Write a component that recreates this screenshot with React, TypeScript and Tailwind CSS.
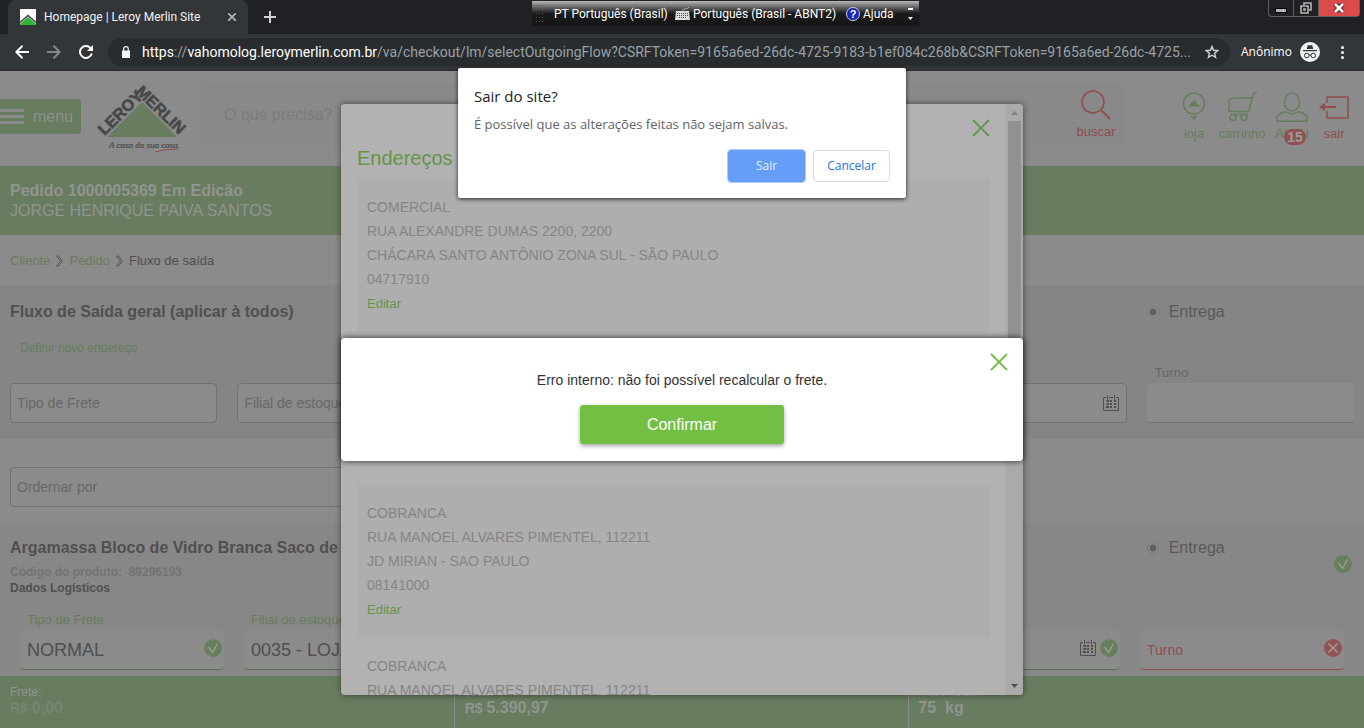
import React from "react";

function Cross({ className }: { className?: string }) {
  return (
    <svg className={className} viewBox="0 0 18 18" fill="none" stroke="currentColor" strokeWidth="1.8" aria-hidden="true">
      <path d="M1 1l16 16M17 1L1 17" />
    </svg>
  );
}

function StatusOk() {
  return (
    <svg className="size-[18px] shrink-0" viewBox="0 0 18 18" aria-hidden="true">
      <circle cx="9" cy="9" r="9" fill="#687f5d" />
      <path d="M4.500 8l4 5.500L13.500 4.500" fill="none" stroke="#a3a3a3" strokeWidth="1.200" />
    </svg>
  );
}

function StatusError() {
  return (
    <svg className="size-[18px] shrink-0" viewBox="0 0 18 18" aria-hidden="true">
      <circle cx="9" cy="9" r="9" fill="#925252" />
      <path d="M4.500 4.500l9 9M13.500 4.500l-9 9" fill="none" stroke="#a3a3a3" strokeWidth="1.200" />
    </svg>
  );
}

function CalendarIcon() {
  return (
    <svg className="size-4 shrink-0" viewBox="0 0 16 16" fill="none" stroke="#4f4f4f" aria-hidden="true">
      <path d="M3 2.500H.5v13h15v-13H13M6 2.500h4M4.500 0v4.500M11.500 0v4.500" />
      <path d="M3.500 6h2.500M7 6h2M11 6h2M3.500 9h2.500M7 9h2M11 9h2M3 12h3M7 12h2M11 12h2" strokeWidth="2" />
    </svg>
  );
}

function Logo() {
  return (
    <svg className="h-[70px] w-[92px]" viewBox="0 0 92 70" role="img" aria-label="Leroy Merlin">
      <path d="M46 19L81 54H11z" fill="#687c5f" />
      <g fill="#484848" fontFamily="Liberation Sans, sans-serif" fontWeight="700" fontSize="16" stroke="#484848" strokeWidth="0.6">
        <text transform="translate(8.500 53) rotate(-44.500)">LEROY</text>
        <text transform="translate(39 9.500) rotate(44)">MERLIN</text>
      </g>
      <text x="13" y="65" fill="#4a4a4a" stroke="#4a4a4a" strokeWidth="0.2" fontFamily="Liberation Serif, serif" fontStyle="italic" fontSize="9">A casa da sua casa.</text>
      <path d="M59 69q10-3 23-3" stroke="#8d4f4f" fill="none" />
    </svg>
  );
}

function BrowserChrome() {
  return (
    <header className="shrink-0 bg-[#202124] font-['Open_Sans','Noto_Sans',sans-serif] text-white">
      <div className="flex h-[34px] items-start pl-2">
        <div className="flex h-full w-60 items-center rounded-t-lg bg-[#323639] pr-2 pl-3">
          <svg className="size-4" viewBox="0 0 16 16" aria-hidden="true">
            <path d="M0 0h16v16H0z" fill="#fff" />
            <path d="M0 16v-1L8 8l8 7v1z" fill="#2fb634" />
            <path d="M0 13.500L8 6.500l8 7" stroke="#444" strokeWidth="1.500" fill="none" />
          </svg>
          <span className="ml-2 flex-1 truncate font-['Roboto',sans-serif] text-xs text-[#f1f3f4]">Homepage | Leroy Merlin Site</span>
          <button aria-label="Fechar guia" className="flex size-4 items-center justify-center text-[#b5b7b9]">
            <svg className="size-2" viewBox="0 0 8 8" stroke="currentColor" strokeWidth="1.600" aria-hidden="true">
              <path d="M0 0l8 8M8 0L0 8" />
            </svg>
          </button>
        </div>
        <button aria-label="Nova guia" className="ml-4 flex h-[34px] w-3 items-center justify-center text-[#d0d2d4]">
          <svg className="size-3" viewBox="0 0 12 12" stroke="currentColor" strokeWidth="2" aria-hidden="true">
            <path d="M6 0v12M0 6h12" />
          </svg>
        </button>
        <div className="mr-1 ml-auto flex h-[17px] rounded-b border border-t-0 border-[#5b5d60]">
          <button aria-label="Minimizar" className="flex w-6 items-center justify-center">
            <span className="mt-1 h-[5px] w-3 border border-black bg-[#b5b5b5]" />
          </button>
          <button aria-label="Restaurar" className="flex w-[26px] items-center justify-center border-x border-[#5b5d60]">
            <svg className="size-3" viewBox="0 0 12 12" fill="none" stroke="#b5b5b5" strokeWidth="1.600" aria-hidden="true">
              <path d="M4 3V1h7v7H9M1 4h7v7H1zM4 7h1v1H4z" />
            </svg>
          </button>
          <button aria-label="Fechar" className="flex w-10 items-center justify-center bg-[#dc4b4b]">
            <svg className="h-[10px] w-3" viewBox="0 0 12 10" aria-hidden="true">
              <path d="M2 1l8 8M10 1L2 9" stroke="#3b1c1c" strokeWidth="4.500" />
              <path d="M2 1l8 8M10 1L2 9" stroke="#fff" strokeWidth="2.600" />
            </svg>
          </button>
        </div>
      </div>
      <div className="flex h-9 items-center bg-[#323639] pr-[18px] pl-[6px]">
        <button aria-label="Voltar" className="flex w-8 justify-center">
          <svg className="size-[14px]" viewBox="0 0 14 14" fill="none" stroke="#fff" strokeWidth="2" aria-hidden="true">
            <path d="M14 7H1.500M7.500 0.800L1.300 7l6.200 6.200" />
          </svg>
        </button>
        <button aria-label="Avançar" className="flex w-8 justify-center">
          <svg className="size-[14px]" viewBox="0 0 14 14" fill="none" stroke="#85888b" strokeWidth="2" aria-hidden="true">
            <path d="M0 7h12.500M6.500 0.800L12.700 7l-6.200 6.200" />
          </svg>
        </button>
        <button aria-label="Recarregar" className="flex w-8 justify-center">
          <svg className="size-[14px]" viewBox="0 0 14 14" aria-hidden="true">
            <path d="M11.500 3A6 6 0 1 0 12.800 8.500" fill="none" stroke="#fff" strokeWidth="2" />
            <path d="M14 0v6H8z" fill="#fff" />
          </svg>
        </button>
        <div className="ml-[6px] flex h-7 min-w-0 flex-1 items-center rounded-full bg-[#282c2f] pr-[11px] pl-[14px]">
          <svg className="h-3 w-2 shrink-0" viewBox="0 0 8 12" aria-hidden="true">
            <path d="M0 4.500h8V12H0z" fill="#f1f3f4" />
            <path d="M1.700 5V3a2.300 2.300 0 0 1 4.600 0v2" fill="none" stroke="#f1f3f4" strokeWidth="1.200" />
          </svg>
          <span className="ml-3 flex-1 overflow-hidden font-['Roboto',sans-serif] text-sm whitespace-nowrap text-[#9aa0a6]">
            <span className="text-white">https</span>://<span className="text-white">vahomolog.leroymerlin.com.br</span>
            /va/checkout/lm/selectOutgoingFlow?CSRFToken=9165a6ed-26dc-4725-9183-b1ef084c268b&amp;CSRFToken=9165a6ed-26dc-4725...
          </span>
          <button aria-label="Favoritar" className="shrink-0">
            <svg className="size-[14px]" viewBox="0 0 14 14" fill="none" stroke="#d0d3d6" strokeWidth="1.400" aria-hidden="true">
              <path d="M7 1.500l1.600 3.800 4.100.3-3.100 2.700 1 4L7 10.200l-3.600 2.100 1-4L1.300 5.600l4.100-.3z" />
            </svg>
          </button>
        </div>
        <span className="ml-[11px] w-[50px] text-xs whitespace-nowrap">Anônimo</span>
        <svg className="ml-[9px] size-5" viewBox="0 0 20 20" aria-hidden="true">
          <circle cx="10" cy="10" r="10" fill="#f1f3f4" />
          <path d="M6.800 7l1-4 2.200.6 2.200-.6 1 4zM3 8h14v1.200H3z" fill="#323639" />
          <g fill="none" stroke="#323639">
            <circle cx="6.800" cy="13.500" r="2.300" />
            <circle cx="13.200" cy="13.500" r="2.300" />
            <path d="M9 13.200h2" />
          </g>
        </svg>
        <button aria-label="Mais opções" className="ml-[18px] flex w-2 flex-col items-center gap-[2px]">
          <span className="size-[3px] rounded-full bg-white" />
          <span className="size-[3px] rounded-full bg-white" />
          <span className="size-[3px] rounded-full bg-white" />
        </button>
      </div>
      <div className="h-px bg-[#2f2b2d]" />
    </header>
  );
}

function LanguageBar() {
  return (
    <div className="absolute top-px left-[532px] flex h-[25px] w-[387px] items-center bg-linear-to-b from-[#b9b9b9] from-0% via-[#1b1b1b] via-50% to-[#151515] font-['Roboto',sans-serif] text-xs whitespace-nowrap text-white">
      <svg className="ml-1 h-[18px] w-2" viewBox="0 0 8 18" aria-hidden="true">
        <path d="M.5 0v18M3.500 0v18M6.500 0v18" stroke="#555" strokeDasharray="1 3" />
      </svg>
      <span className="ml-[10px] w-[113px]">PT Português (Brasil)</span>
      <svg className="ml-2 h-[13px] w-[15px]" viewBox="0 0 15 13" aria-hidden="true">
        <path d="M7 4q0-2 3-2t4-2" fill="none" stroke="#aaa" />
        <path d="M1 4h13l1 9H0z" fill="#ddd" />
        <path d="M2 6.500h11M2 8.500h11M4 10.500h7" stroke="#444" strokeDasharray="1 1" />
      </svg>
      <span className="ml-[3px] w-[141px]">Português (Brasil - ABNT2)</span>
      <svg className="ml-3 size-[14px]" viewBox="0 0 14 14" aria-hidden="true">
        <circle cx="7" cy="7" r="6.500" fill="#1822b8" stroke="#c8cdf0" />
        <text x="7" y="11" textAnchor="middle" fontSize="11" fontWeight="700" fill="#fff" fontFamily="Liberation Sans, sans-serif">?</text>
      </svg>
      <span className="ml-[3px]">Ajuda</span>
      <svg className="mr-[6px] ml-auto h-[13px] w-[5px]" viewBox="0 0 5 13" fill="#fff" aria-hidden="true">
        <path d="M0 1h5v2H0zM0 10h5l-2.500 3z" />
      </svg>
    </div>
  );
}

function TopBar() {
  return (
    <div className="flex h-[95px] shrink-0 items-start">
      <button className="mt-7 flex h-[35px] w-[81px] items-center rounded-r bg-[#687c5f] text-base text-[#8d918b]">
        <svg className="h-[15px] w-6" viewBox="0 0 24 15" fill="#8b8b8b" aria-hidden="true">
          <path d="M0 0h24v3H0zM0 6h24v3H0zM0 12h24v3H0z" />
        </svg>
        <span className="ml-[9px]">menu</span>
      </button>
      <div className="mt-3 ml-[15px]">
        <Logo />
      </div>
      <div className="mt-[13px] ml-[14px] flex h-[62px] flex-1 items-center rounded bg-[#898989]">
        <input aria-label="Busca" placeholder="O que precisa?" className="min-w-0 flex-1 bg-transparent pl-[22px] text-base placeholder:text-[#7c7c7c] focus:outline-none" />
        <button className="flex w-[58px] flex-col items-center text-[13px] leading-4 text-[#8f4f4f]">
          <svg className="size-[30px]" viewBox="0 0 30 30" fill="none" stroke="currentColor" strokeWidth="1.600" aria-hidden="true">
            <circle cx="12" cy="12" r="11" />
            <path d="M20.500 20.500l8.500 8.500" strokeWidth="2" />
          </svg>
          <span className="mt-1">buscar</span>
        </button>
      </div>
      <nav className="mt-[21px] mr-2 ml-[51px] flex text-[13px] leading-4 text-[#667e5c]">
        <a href="#loja" className="flex w-9 flex-col items-center">
          <svg className="h-[30px] w-6" viewBox="0 0 24 30" fill="none" stroke="currentColor" strokeWidth="1.500" aria-hidden="true">
            <circle cx="12" cy="11.500" r="10.500" />
            <path d="M6 14.500l6-6.500 6 6.500zM8.500 24h7L12 28.500z" fill="currentColor" stroke="none" />
          </svg>
          <span className="mt-1">loja</span>
        </a>
        <a href="#carrinho" className="flex w-[60px] flex-col items-center">
          <svg className="h-[30px] w-8" viewBox="0 0 32 30" fill="none" stroke="currentColor" strokeWidth="1.500" aria-hidden="true">
            <path d="M31 1h-3l-5.500 18.500H3V9Q3 6.500 6 6.500l20-1" />
            <circle cx="7" cy="25.500" r="3" />
            <circle cx="18" cy="25.500" r="3" />
            <path d="M5 22.500h17" />
          </svg>
          <span className="mt-1">carrinho</span>
        </a>
        <a href="#conta" className="relative flex w-10 flex-col items-center">
          <svg className="h-[30px] w-8" viewBox="0 0 32 30" fill="none" stroke="currentColor" strokeWidth="1.500" aria-hidden="true">
            <ellipse cx="16" cy="10" rx="7.500" ry="9" />
            <path d="M1 29.300h30v-3q0-5-9-6.500-6 4-12 0-9 1.500-9 6.500z" />
          </svg>
          <span className="mt-1">ALAN</span>
          <span className="absolute top-[37px] left-3 flex h-4 w-[22px] items-center justify-center rounded-full bg-[#8d5151] text-sm font-bold text-[#9c9c9c]">15</span>
        </a>
        <a href="#sair" className="flex w-11 flex-col items-center text-[#8f4f4f]">
          <svg className="h-[30px] w-[30px]" viewBox="0 0 30 30" fill="none" stroke="currentColor" strokeWidth="1.500" aria-hidden="true">
            <path d="M8 11V5h21v21H8v-7" />
            <path d="M4 15h13" strokeWidth="2.200" />
            <path d="M0 15l6-4v8z" fill="currentColor" stroke="none" />
          </svg>
          <span className="mt-1">sair</span>
        </a>
      </nav>
    </div>
  );
}

function DeliveryRadio({ name }: { name: string }) {
  return (
    <label className="flex items-center text-base text-[#595959]">
      <input type="radio" name={name} defaultChecked className="size-3 appearance-none rounded-full border border-[#787878] bg-[radial-gradient(circle,#606060_3px,#8e8e8e_4px)]" />
      <span className="ml-[10px]">Entrega</span>
    </label>
  );
}

function Chevron() {
  return (
    <svg className="mx-[6px] h-3 w-[7px]" viewBox="0 0 7 12" fill="none" stroke="#555" aria-hidden="true">
      <path d="M.5 1h2l4 5-4 5h-2l4-5z" />
    </svg>
  );
}

const boxed = "h-10 w-full appearance-none rounded border border-[#727272] bg-[#8b8b8b] px-[6px] text-sm text-[#686868] focus:outline-none";
const filled = "flex h-10 items-center rounded border-b bg-[#8b8b8b] pr-[2px] pb-1 pl-[7px]";
const filledSelect = "mt-1 min-w-0 flex-1 appearance-none text-lg text-[#4f4f4f] focus:outline-none";

function OrderPage() {
  return (
    <main className="flex min-h-0 flex-1 flex-col overflow-hidden">
      <TopBar />
      <div className="flex h-[69px] shrink-0 flex-col justify-center bg-[#687c5f] px-[10px] pt-px text-base leading-5 text-[#929490]">
        <h1 className="font-bold">Pedido 1000005369 Em Edicão</h1>
        <p>JORGE HENRIQUE PAIVA SANTOS</p>
      </div>
      <nav className="flex h-[50px] shrink-0 items-center px-[10px] pt-[2px] text-[13px] text-[#667e5c]">
        <a href="#cliente">Cliente</a>
        <Chevron />
        <a href="#pedido">Pedido</a>
        <Chevron />
        <span className="text-[#4f4f4f]">Fluxo de saída</span>
      </nav>
      <section className="h-[154px] shrink-0 bg-[#858585] px-[10px]">
        <div className="grid grid-cols-6 gap-x-5 pt-[15px]">
          <h2 className="col-span-5 text-base font-bold text-[#505050]">Fluxo de Saída geral (aplicar à todos)</h2>
          <DeliveryRadio name="geral" />
        </div>
        <div className="mt-3 flex h-6 items-center pl-[10px] text-xs text-[#667e5c]">
          <a href="#endereco">Definir novo endereço</a>
        </div>
        <div className="mt-[3px] grid grid-cols-6 items-end gap-x-5">
          <select aria-label="Tipo de Frete" className={boxed}><option>Tipo de Frete</option></select>
          <select aria-label="Filial de estoque" className={boxed}><option>Filial de estoque</option></select>
          <span className="col-span-2" />
          <div className="flex h-10 items-center justify-end rounded border border-[#727272] bg-[#8b8b8b] pr-[7px]">
            <input aria-label="Data" className="min-w-0 flex-1 bg-transparent focus:outline-none" />
            <CalendarIcon />
          </div>
          <label className="flex h-[60px] flex-col text-[13px] leading-5 text-[#686868]">
            <span className="pl-2">Turno</span>
            <input className="h-10 w-full rounded border-b border-[#727272] bg-[#8b8b8b] px-2 focus:outline-none" />
          </label>
        </div>
      </section>
      <div className="h-[84px] shrink-0 px-[10px] pt-7">
        <div className="w-1/2">
          <select aria-label="Ordernar por" className={boxed}><option>Ordernar por</option></select>
        </div>
      </div>
      <section className="flex-1 bg-[#878787]">
        <div className="grid grid-cols-6 gap-x-5 px-[10px] pt-[13px]">
          <div className="col-span-5">
            <h2 className="text-base font-bold text-[#505050]">Argamassa Bloco de Vidro Branca Saco de</h2>
            <p className="mt-1 text-xs leading-4 font-bold text-[#737373]">Código do produto:&nbsp; 89296193</p>
            <p className="text-xs leading-4 font-bold text-[#505050]">Dados Logísticos</p>
          </div>
          <div className="relative">
            <DeliveryRadio name="item" />
            <span className="absolute top-[19px] right-[2px]"><StatusOk /></span>
          </div>
        </div>
        <div className="mt-4 grid grid-cols-6 items-end gap-x-5 px-5 text-[#667e5c]">
          <label className="text-[13px] leading-4">
            <span className="block pb-[2px] pl-[7px]">Tipo de Frete</span>
            <span className={`${filled} border-[#5c7550]`}>
              <select className={filledSelect}><option>NORMAL</option></select>
              <StatusOk />
            </span>
          </label>
          <label className="text-[13px] leading-4">
            <span className="block pb-[2px] pl-[7px]">Filial de estoque</span>
            <span className={`${filled} border-[#5c7550]`}>
              <select className={filledSelect}><option>0035 - LOJA</option></select>
            </span>
          </label>
          <span className="col-span-2" />
          <div className={`${filled} gap-1 border-[#5c7550]`}>
            <input aria-label="Data de entrega" className="min-w-0 flex-1 bg-transparent focus:outline-none" />
            <CalendarIcon />
            <StatusOk />
          </div>
          <div className={`${filled} border-[#8f4f4f]`}>
            <input aria-label="Turno" placeholder="Turno" className="mt-1 min-w-0 flex-1 bg-transparent text-sm placeholder:text-[#8f4f4f] focus:outline-none" />
            <StatusError />
          </div>
        </div>
      </section>
    </main>
  );
}

function Totals() {
  return (
    <footer className="grid h-[52px] shrink-0 grid-cols-3 bg-[#687c5f] text-xs leading-4 text-[#929490]">
      <div className="border-r border-[#8b8b8b] px-[10px] pt-2">
        <p>Frete:</p>
        <p className="text-sm leading-4 font-bold text-[#76866f]">R$ <span className="text-base leading-4">0,00</span></p>
      </div>
      <div className="border-r border-[#8b8b8b] px-[10px] pt-2">
        <p>Total:</p>
        <p className="text-sm leading-4 font-bold">R$ <span className="text-base leading-4">5.390,97</span></p>
      </div>
      <div className="px-[9px] pt-2">
        <p>Peso Total:</p>
        <p className="text-base leading-4 font-bold">75 &nbsp;kg</p>
      </div>
    </footer>
  );
}

const addresses: string[][] = [
  ["COMERCIAL", "RUA ALEXANDRE DUMAS 2200, 2200", "CHÁCARA SANTO ANTÔNIO ZONA SUL - SÃO PAULO", "04717910"],
  [],
  ["COBRANCA", "RUA MANOEL ALVARES PIMENTEL, 112211", "JD MIRIAN - SAO PAULO", "08141000"],
  ["COBRANCA", "RUA MANOEL ALVARES PIMENTEL, 112211"],
];

function AddressModal() {
  return (
    <div role="dialog" aria-label="Endereços" className="absolute inset-y-[33px] left-1/2 flex w-1/2 -translate-x-1/2 overflow-hidden rounded-sm bg-[#b2b2b2] shadow-[0_0_6px_rgba(0,0,0,0.5)]">
      <div className="min-w-0 flex-1 overflow-hidden px-4">
        <div className="flex h-[75px] items-start justify-between pt-[15px]">
          <h2 className="mt-[25px] text-xl leading-7 text-[#649549]">Endereços</h2>
          <button aria-label="Fechar endereços" className="text-[#649549]"><Cross className="size-[18px]" /></button>
        </div>
        <ul className="text-sm leading-6 text-[#858585]">
          {addresses.map((lines, i) => (
            <li key={i} className="h-[153px] px-[10px] pt-4 odd:bg-[#aeaeae]">
              {lines.map((line) => <p key={line}>{line}</p>)}
              {lines.length === 4 && <a href="#editar" className="block text-[13px] leading-[26px] text-[#649549]">Editar</a>}
            </li>
          ))}
        </ul>
      </div>
      <div className="flex w-[17px] flex-col items-center bg-[#aaaaaa]">
        <svg className="h-[17px] w-[7px] shrink-0" viewBox="0 0 7 17" fill="#808080" aria-hidden="true"><path d="M0 11h7L3.500 7z" /></svg>
        <span className="h-1/2 w-[13px] bg-[#919191]" />
        <svg className="mt-auto h-[17px] w-[7px] shrink-0" viewBox="0 0 7 17" fill="#505050" aria-hidden="true"><path d="M0 6h7l-3.500 4z" /></svg>
      </div>
    </div>
  );
}

function ErrorDialog() {
  return (
    <div role="alertdialog" aria-label="Erro" className="absolute inset-x-0 top-[267px] mx-auto flex h-[123px] w-1/2 flex-col items-center rounded-sm bg-white pt-8 shadow-[0_0_6px_rgba(0,0,0,0.8)]">
      <button aria-label="Fechar" className="absolute top-[15px] right-[15px] text-[#72bf44]"><Cross className="size-[18px]" /></button>
      <p className="text-sm leading-5 text-[#333]">Erro interno: não foi possível recalcular o frete.</p>
      <button className="mt-[15px] h-[39px] w-[30%] rounded-[3px] bg-[#72bf44] text-base text-white shadow-[0_2px_4px_rgba(0,0,0,0.35)]">Confirmar</button>
    </div>
  );
}

function LeaveDialog() {
  return (
    <div role="dialog" aria-labelledby="leave-title" className="absolute top-[68px] left-1/2 w-[448px] -translate-x-1/2 rounded-[2px] bg-white px-4 pt-[18px] pb-4 font-['Open_Sans','Noto_Sans',sans-serif] shadow-[0_1px_4px_rgba(0,0,0,0.8)]">
      <h2 id="leave-title" className="text-[15px] leading-5 text-[#202124]">Sair do site?</h2>
      <p className="mt-2 text-[13px] leading-5 text-[#5f6368]">É possível que as alterações feitas não sejam salvas.</p>
      <div className="mt-4 flex justify-end gap-2 text-xs">
        <button className="h-8 w-[77px] rounded-[3px] bg-[#669df6] text-[#e8f0fe] outline-1 outline-[#aecbfa]">Sair</button>
        <button className="h-8 w-[77px] rounded border border-[#dadce0] text-[#1a73e8]">Cancelar</button>
      </div>
    </div>
  );
}

export default function App() {
  return (
    <div className="relative flex h-screen flex-col overflow-hidden bg-[#8b8b8b] font-['Liberation_Sans',Arial,sans-serif]">
      <BrowserChrome />
      <div className="relative flex min-h-0 flex-1 flex-col">
        <OrderPage />
        <Totals />
        <AddressModal />
        <ErrorDialog />
      </div>
      <LanguageBar />
      <LeaveDialog />
    </div>
  );
}
